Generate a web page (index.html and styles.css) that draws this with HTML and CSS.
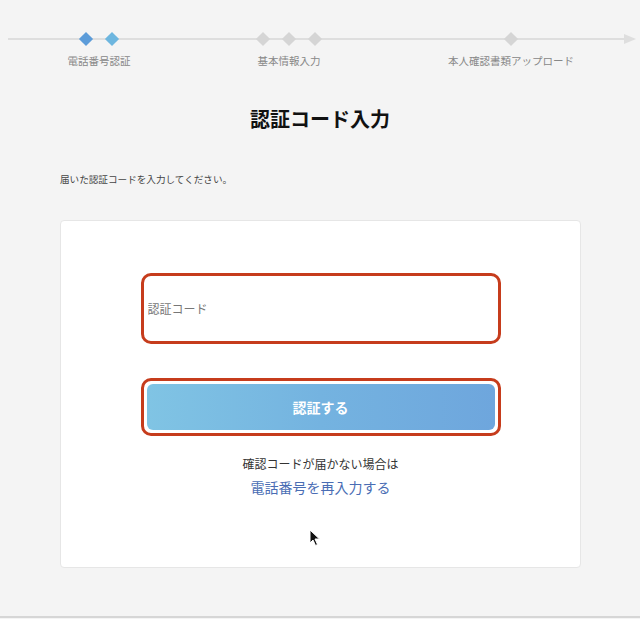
FILE: index.html
```html
<!DOCTYPE html>
<html lang="ja">
<head>
<meta charset="utf-8">
<link rel="stylesheet" href="styles.css">
</head>
<body>
<div class="page">
  <div class="stepper">
    <div class="track"><span class="track-line"></span><span class="track-arrow"></span></div>
    <div class="step step-1">
      <div class="marks"><span class="dia dia-a"></span><span class="dia dia-b"></span></div>
      <div class="label">電話番号認証</div>
    </div>
    <div class="step step-2">
      <div class="marks"><span class="dia"></span><span class="dia"></span><span class="dia"></span></div>
      <div class="label">基本情報入力</div>
    </div>
    <div class="step step-3">
      <div class="marks"><span class="dia"></span></div>
      <div class="label">本人確認書類アップロード</div>
    </div>
  </div>

  <h1 class="title">認証コード入力</h1>
  <p class="lead">届いた認証コードを入力してください。</p>

  <div class="card">
    <div class="field">
      <input class="code-input" type="text" placeholder="認証コード">
    </div>
    <div class="btn-ring">
      <button class="btn" type="button">認証する</button>
    </div>
    <p class="note">確認コードが届かない場合は</p>
    <a class="relink" href="#">電話番号を再入力する</a>
  </div>
  <div class="bottom-line"></div>
</div>
<svg class="cursor" width="12" height="18" viewBox="0 0 12 18"><path d="M1 1 L1 14 L4 11 L6.5 16.5 L8.5 15.5 L6 10 L10.5 10 Z" fill="#111" stroke="#fff" stroke-width="1"/></svg>
</body>
</html>
```
FILE: styles.css
```css
* { box-sizing: border-box; }
html, body { margin: 0; padding: 0; }
body {
  background: #f4f4f4;
  font-family: "Noto Sans CJK JP", "Noto Sans", sans-serif;
  color: #222;
  width: 640px;
  height: 619px;
  overflow: hidden;
  position: relative;
}
.page { padding-top: 32px; }

.stepper {
  position: relative;
  display: flex;
  padding-left: 8px;
}
.track {
  position: absolute;
  left: 8px;
  top: 6px;
  width: 628px;
  height: 2px;
}
.track-line {
  position: absolute;
  left: 0; top: 0;
  width: 618px;
  height: 2px;
  background: #dedede;
}
.track-arrow {
  position: absolute;
  right: 0;
  top: -4px;
  width: 0; height: 0;
  border-left: 12px solid #dedede;
  border-top: 5px solid transparent;
  border-bottom: 5px solid transparent;
}
.step {
  position: relative;
  display: flex;
  flex-direction: column;
  align-items: center;
}
.step-1 { width: 182px; }
.step-2 { width: 198px; }
.step-3 { width: 246px; }
.marks {
  display: flex;
  gap: 16px;
  height: 14px;
  align-items: center;
}
.dia {
  width: 10px;
  height: 10px;
  background: #d5d5d5;
  transform: rotate(45deg);
}
.dia-a { background: #5c9cd9; }
.dia-b { background: #6db6df; }
.label {
  margin-top: 8px;
  font-size: 10.5px;
  line-height: 14px;
  color: #888;
}

.title {
  margin: 37px 0 0;
  text-align: center;
  font-size: 20px;
  line-height: 28px;
  font-weight: 700;
  color: #111;
}
.lead {
  margin: 39px 0 0 60px;
  font-size: 9.6px;
  line-height: 14px;
  color: #444;
}

.card {
  margin: 34px 0 0 60px;
  width: 521px;
  height: 348px;
  background: #fff;
  border: 1px solid #e6e6e6;
  border-radius: 4px;
  padding-top: 52px;
  display: flex;
  flex-direction: column;
  align-items: center;
}
.field { width: 360px; }
.code-input {
  display: block;
  width: 360px;
  height: 71px;
  border: 3px solid #c63c1c;
  border-radius: 10px;
  padding: 0 4px;
  font-family: inherit;
  font-size: 12px;
  color: #333;
  background: #fff;
  outline: none;
}
.code-input::placeholder { color: #777; }

.btn-ring {
  margin-top: 34px;
  width: 360px;
  height: 58px;
  border: 3px solid #c63c1c;
  border-radius: 10px;
  padding: 3px;
  background: #fff;
}
.btn {
  display: block;
  width: 100%;
  height: 100%;
  border: none;
  border-radius: 6px;
  background: linear-gradient(90deg, #80c4e4 0%, #74b3e0 50%, #6ea6dd 100%);
  color: #fff;
  font-family: inherit;
  font-size: 14px;
  font-weight: 700;
}
.note {
  margin: 19px 0 0;
  font-size: 12px;
  line-height: 18px;
  color: #333;
}
.relink {
  margin-top: 4px;
  font-size: 14px;
  line-height: 20px;
  color: #4a6db4;
  text-decoration: none;
}
.bottom-line {
  margin-top: 48px;
  height: 2px;
  background: #d6d6d6;
}
.cursor {
  position: absolute;
  left: 309px;
  top: 529px;
}
```
